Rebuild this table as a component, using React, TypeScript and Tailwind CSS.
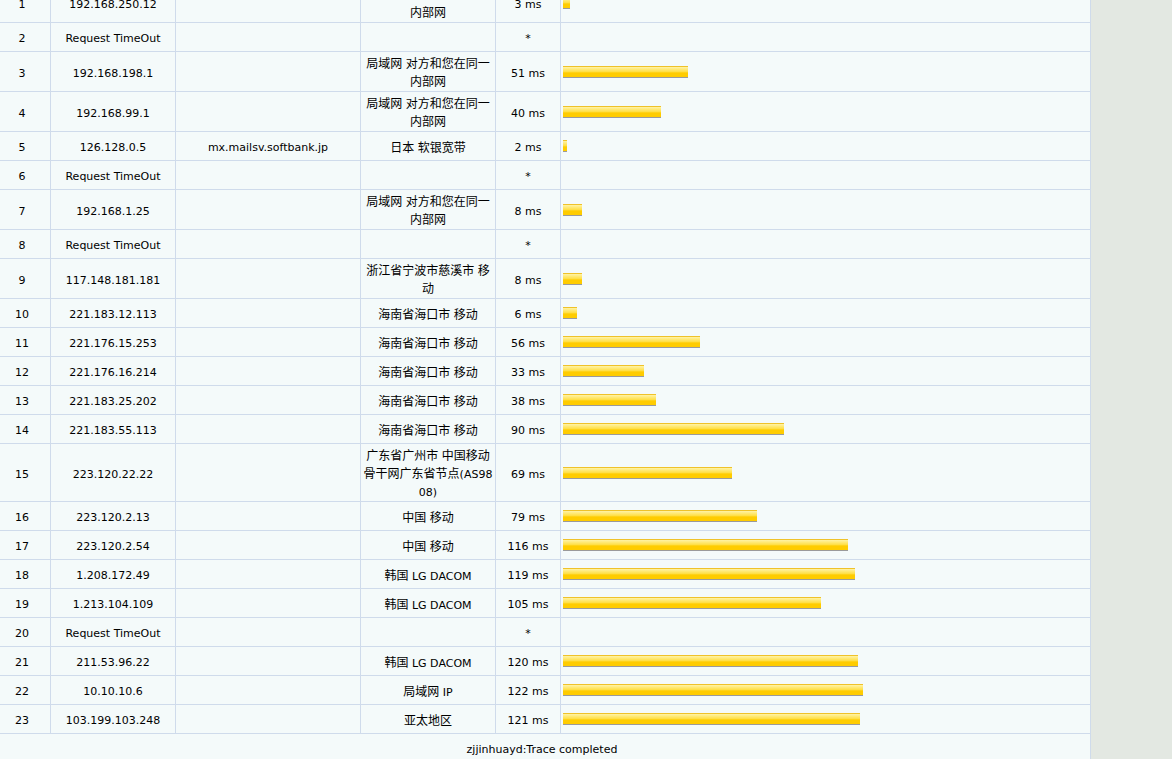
import React from "react";

type Hop = { n: number; ip: string; host?: string; loc?: string; ms?: number };

const hops: Hop[] = [
  { n: 1, ip: "192.168.250.12", loc: "局域网 对方和您在同一内部网", ms: 3 },
  { n: 2, ip: "Request TimeOut" },
  { n: 3, ip: "192.168.198.1", loc: "局域网 对方和您在同一内部网", ms: 51 },
  { n: 4, ip: "192.168.99.1", loc: "局域网 对方和您在同一内部网", ms: 40 },
  { n: 5, ip: "126.128.0.5", host: "mx.mailsv.softbank.jp", loc: "日本 软银宽带", ms: 2 },
  { n: 6, ip: "Request TimeOut" },
  { n: 7, ip: "192.168.1.25", loc: "局域网 对方和您在同一内部网", ms: 8 },
  { n: 8, ip: "Request TimeOut" },
  { n: 9, ip: "117.148.181.181", loc: "浙江省宁波市慈溪市 移动", ms: 8 },
  { n: 10, ip: "221.183.12.113", loc: "海南省海口市 移动", ms: 6 },
  { n: 11, ip: "221.176.15.253", loc: "海南省海口市 移动", ms: 56 },
  { n: 12, ip: "221.176.16.214", loc: "海南省海口市 移动", ms: 33 },
  { n: 13, ip: "221.183.25.202", loc: "海南省海口市 移动", ms: 38 },
  { n: 14, ip: "221.183.55.113", loc: "海南省海口市 移动", ms: 90 },
  { n: 15, ip: "223.120.22.22", loc: "广东省广州市 中国移动骨干网广东省节点(AS9808)", ms: 69 },
  { n: 16, ip: "223.120.2.13", loc: "中国 移动", ms: 79 },
  { n: 17, ip: "223.120.2.54", loc: "中国 移动", ms: 116 },
  { n: 18, ip: "1.208.172.49", loc: "韩国 LG DACOM", ms: 119 },
  { n: 19, ip: "1.213.104.109", loc: "韩国 LG DACOM", ms: 105 },
  { n: 20, ip: "Request TimeOut" },
  { n: 21, ip: "211.53.96.22", loc: "韩国 LG DACOM", ms: 120 },
  { n: 22, ip: "10.10.10.6", loc: "局域网 IP", ms: 122 },
  { n: 23, ip: "103.199.103.248", loc: "亚太地区", ms: 121 },
];

function Mixed({ text }: { text: string }) {
  const parts = text.split(/([\u3000-\u9fff\uff00-\uffef]+)/);
  return (
    <>
      {parts.map((p, i) =>
        /[\u3000-\u9fff\uff00-\uffef]/.test(p) ? (
          <span key={i} className="text-[12px] leading-[12px]">
            {p}
          </span>
        ) : (
          <span key={i} className="leading-[12px]">
            {p}
          </span>
        )
      )}
    </>
  );
}

const cell =
  "flex items-center justify-center text-center border-r border-[#cfdbeb] min-h-[28px] leading-[18px]";

function Row({ h }: { h: Hop }) {
  return (
    <div className="flex items-stretch border-b border-[#cfdbeb]">
      <div className={`${cell} w-[57px] shrink-0 pt-[4px]`}>{h.n}</div>
      <div className={`${cell} w-[125px] shrink-0 pt-[4px]`}>{h.ip}</div>
      <div className={`${cell} w-[185px] shrink-0 pt-[4px]`}>{h.host ?? ""}</div>
      <div className={`${cell} w-[135px] shrink-0 px-[2px] pt-[3px] break-all`}>
        <div className="leading-[18px] translate-y-[1px]">{h.loc ? <Mixed text={h.loc} /> : ""}</div>
      </div>
      <div className={`${cell} w-[65px] shrink-0 pt-[4px]`}>{h.ms !== undefined ? `${h.ms} ms` : "*"}</div>
      <div className="flex items-center w-[530px] shrink-0 border-r border-[#cfdbeb] pl-[2px]">
        {h.ms !== undefined && (
          <div
            className="h-[12px] border-t border-t-[#efc22a] border-b border-b-[#9a9a9a] bg-[linear-gradient(#fff3a6,#ffe04a_45%,#ffcc00_60%,#ffcc00)]"
            style={{ width: Math.floor(h.ms * 2.46) }}
          />
        )}
      </div>
    </div>
  );
}

export default function App() {
  return (
    <div
      className="w-[1172px] h-[759px] overflow-hidden bg-[#e3e8e2] text-[11px] text-black"
      style={{ fontFamily: '"DejaVu Sans", "Noto Sans CJK SC", sans-serif' }}
    >
      <div className="ml-[-6px] mt-[-17px] w-[1097px] bg-[#f4fafa]">
        {hops.map((h) => (
          <Row key={h.n} h={h} />
        ))}
        <div className="flex items-center justify-center h-[30px] pt-[2px] border-r border-[#cfdbeb] leading-[18px]">
          zjjinhuayd:Trace completed
        </div>
      </div>
    </div>
  );
}
